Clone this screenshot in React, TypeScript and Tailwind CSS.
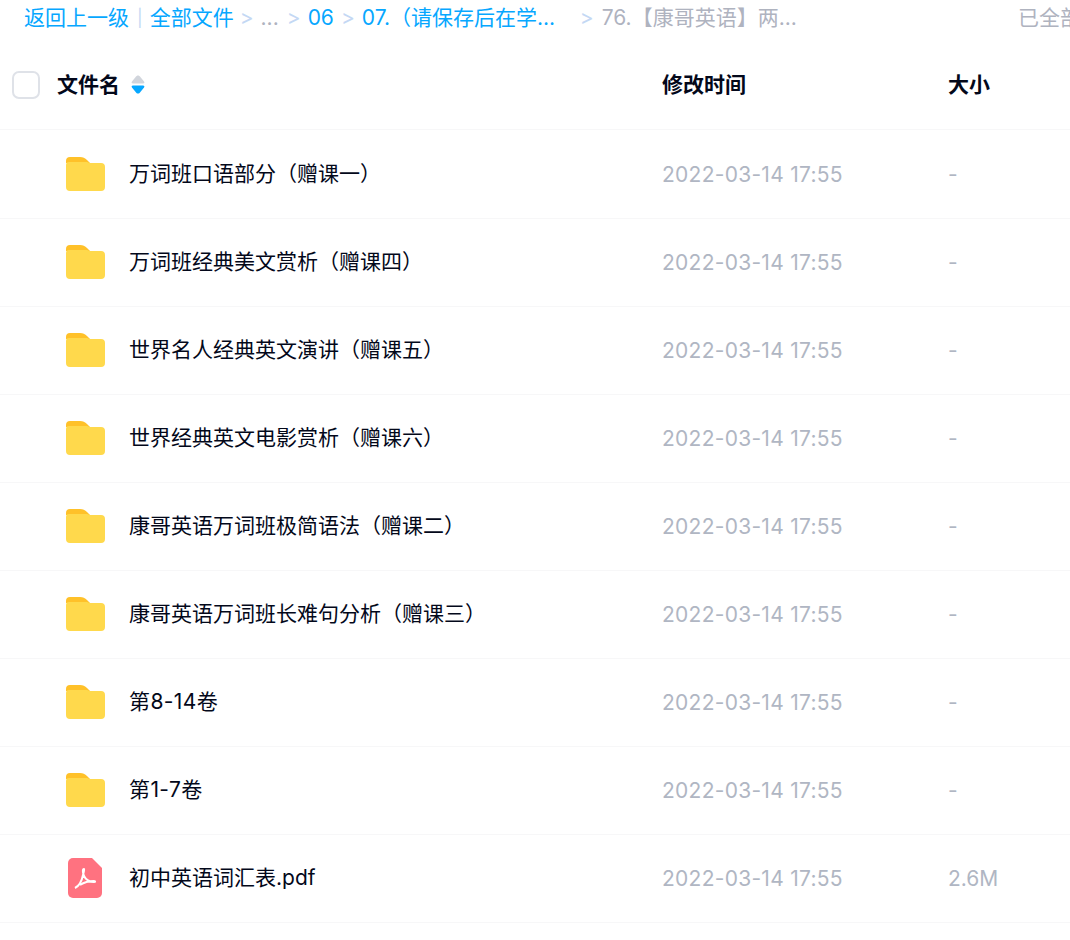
/**
 * File list - folder contents with breadcrumb
 */

const FONT = 'font-["Inter","Noto_Sans_CJK_SC",sans-serif]'

interface FileRow {
  name: string
  size: string
  pdf?: boolean
  wide?: boolean
}

const ROWS: FileRow[] = [
  { name: '万词班口语部分（赠课一）', size: '-' },
  { name: '万词班经典美文赏析（赠课四）', size: '-' },
  { name: '世界名人经典英文演讲（赠课五）', size: '-' },
  { name: '世界经典英文电影赏析（赠课六）', size: '-' },
  { name: '康哥英语万词班极简语法（赠课二）', size: '-' },
  { name: '康哥英语万词班长难句分析（赠课三）', size: '-' },
  { name: '第8-14卷', size: '-', wide: true },
  { name: '第1-7卷', size: '-', wide: true },
  { name: '初中英语词汇表.pdf', size: '2.6M', pdf: true },
]

function FolderIcon() {
  return (
    <svg width="39" height="34" viewBox="0 0 39 34" className="block">
      <path d="M0 4a4 4 0 0 1 4-4h10c3 0 5 1 7 3l3 3H0z" fill="#ffc129" />
      <path d="M0 8a3 3 0 0 1 3-3h18l3 1h11a4 4 0 0 1 4 4v20a4 4 0 0 1-4 4H4a4 4 0 0 1-4-4z" fill="#ffd94c" />
    </svg>
  )
}

function PdfIcon() {
  return (
    <svg width="34" height="40" viewBox="0 0 34 40" className="block">
      <path d="M5 0h19l10 10v25a5 5 0 0 1-5 5H5a5 5 0 0 1-5-5V5a5 5 0 0 1 5-5z" fill="#ff7280" />
      <path
        d="M7 30c4-2 7-8 8-13 .5-2 1.500-5 1-6-1.500 0-1.500 3 0 7 2 4 5 6 10 6 1.500 0 1.500-1 0-1-5 0-11 2-14 4"
        fill="none"
        stroke="#fff"
        strokeWidth="2"
        strokeLinejoin="round"
      />
    </svg>
  )
}

function Sep() {
  return <span className="text-[#c4d8f4] mx-[6px]">&gt;</span>
}

export default function App() {
  return (
    <div className={`${FONT} w-[1070px] h-[940px] overflow-hidden bg-white text-[21px] text-[#03081a]`}>
      {/* Breadcrumb */}
      <div className="flex items-center h-[36px] whitespace-nowrap pl-[24px] leading-[36px] text-[#06a7ff]">
        <div className="flex items-center w-[994px] shrink-0">
          <span>返回上一级</span>
          <span className="text-[#c4d8f4] text-[17px] ml-[8px] mr-[7px]">|</span>
          <span>全部文件</span>
          <Sep />
          <span className="text-[#afb3bf] ml-[1px] mr-[2px]">...</span>
          <Sep />
          <span className="ml-[1px] mr-[1px]">06</span>
          <Sep />
          <span className="w-[218px] shrink-0 ml-[1px]">07.（请保存后在学...</span>
          <span className="text-[#c4d8f4] mr-[8px]">&gt;</span>
          <span className="text-[#afb3bf]">76.【康哥英语】两...</span>
        </div>
        <span className="shrink-0 text-[#afb3bf]">已全部加载，共9个</span>
      </div>

      {/* Table header */}
      <div className="grid grid-cols-[662px_286px_1fr] items-center h-[94px] pt-[4px] border-b border-[#f7f7f8] font-bold">
        <div className="flex items-center pl-[12px]">
          <span className="w-[28px] h-[28px] rounded-[7px] border-2 border-[#dfe2e8] mr-[17px]" />
          <span>文件名</span>
          <span className="flex flex-col gap-[1px] ml-[11px]">
            <svg width="14" height="9" viewBox="0 0 14 9" className="block">
              <path d="M7 .5c1 0 1.600.6 2.200 1.300l3.800 4.700c.8 1 .4 2-1 2H2c-1.400 0-1.800-1-1-2l3.800-4.700C5.400 1.100 6 .5 7 .5z" fill="#d1d5dc" />
            </svg>
            <svg width="14" height="9" viewBox="0 0 14 9" className="block">
              <path d="M7 8.500c1 0 1.600-.6 2.200-1.300l3.800-4.700c.8-1 .4-2-1-2H2c-1.400 0-1.800 1-1 2l3.800 4.700c.6.7 1.200 1.300 2.200 1.300z" fill="#06a7ff" />
            </svg>
          </span>
        </div>
        <span>修改时间</span>
        <span>大小</span>
      </div>

      {/* Rows */}
      <div className="mt-[1px]">
        {ROWS.map((row) => (
          <div key={row.name} className="grid grid-cols-[662px_286px_1fr] items-center h-[88px] pb-[2px] border-b border-[#f7f7f8]">
            <div className="flex items-center">
              <span className={`w-[129px] ${row.pdf ? 'pl-[68px]' : 'pl-[66px]'}`}>
                {row.pdf ? <PdfIcon /> : <FolderIcon />}
              </span>
              <span className={row.wide ? 'tracking-[0.4px]' : ''}>{row.name}</span>
            </div>
            <span className="pt-[2px] text-[#b0b6c3] tracking-[0.27px]">2022-03-14 17:55</span>
            <span className="pt-[2px] text-[#b0b6c3]">{row.size}</span>
          </div>
        ))}
      </div>
    </div>
  )
}
